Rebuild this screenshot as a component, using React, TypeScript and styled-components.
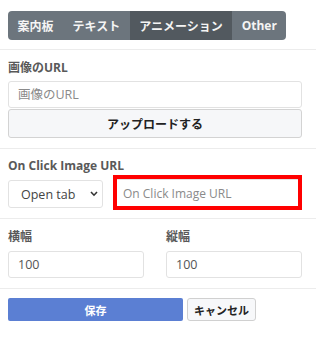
import React from "react";
import styled, { createGlobalStyle } from "styled-components";

const Global = createGlobalStyle`
  html, body { margin: 0; padding: 0; background: #ffffff; }
  body { font-family: "Open Sans", "Noto Sans CJK JP", sans-serif; }
  * { box-sizing: border-box; }
`;

const Page = styled.div`
  width: 316px;
`;

const Section = styled.div<{ $top?: number; $bottom?: number; $last?: boolean }>`
  padding: ${(p) => p.$top ?? 9}px 14px ${(p) => p.$bottom ?? 10}px 8px;
  border-bottom: ${(p) => (p.$last ? "none" : "1px solid #ececec")};
`;

const Tabs = styled.div`
  display: inline-flex;
  border-radius: 4px;
  overflow: hidden;
  height: 29px;
`;

const Tab = styled.div<{ $active?: boolean }>`
  display: flex;
  align-items: center;
  padding: 0 9.5px;
  font-size: 12px;
  font-weight: 700;
  color: #f4f4f4;
  background: ${(p) => (p.$active ? "#52595f" : "#6c757d")};
  font-family: "Open Sans", "Noto Sans CJK JP", sans-serif;
`;

const Label = styled.div<{ $mb?: number }>`
  font-size: 12px;
  font-weight: 700;
  color: #595959;
  line-height: 18px;
  margin-bottom: ${(p) => p.$mb ?? 4}px;
`;

const TextInput = styled.input`
  display: block;
  width: 100%;
  height: 27px;
  border: 1px solid #e2e2e2;
  border-radius: 3px;
  padding: 0 9px;
  font-size: 12.5px;
  font-family: "Open Sans", "Noto Sans CJK JP", sans-serif;
  color: #555;
  background: #fff;
  &::placeholder { color: #8a8a8a; }
`;

const UploadButton = styled.button`
  display: block;
  width: 100%;
  height: 29px;
  margin-top: 1px;
  border: 1px solid #d3d3d3;
  border-radius: 3px;
  background: #f6f7f9;
  font-size: 12px;
  font-weight: 700;
  color: #222;
  font-family: "Open Sans", "Noto Sans CJK JP", sans-serif;
`;

const Row = styled.div`
  display: flex;
  align-items: flex-start;
  gap: 10px;
`;

const SelectWrap = styled.div`
  position: relative;
  width: 95px;
  flex: none;
`;

const Select = styled.select`
  appearance: none;
  -webkit-appearance: none;
  display: block;
  width: 100%;
  height: 28px;
  border: 1px solid #e2e2e2;
  border-radius: 3px;
  background: #fff;
  padding: 0 0 0 12px;
  font-size: 12.5px;
  color: #444;
  font-family: "Open Sans", sans-serif;
`;

const Chevron = styled.svg`
  position: absolute;
  right: 5px;
  top: 11px;
  pointer-events: none;
`;

const Highlight = styled.div`
  flex: 1;
  margin: -5px 0 -2px;
  border: 4px solid #ff0000;
`;

const HighlightInput = styled(TextInput)`
  border-radius: 0;
  border-width: 1px 0 0 0;
  height: 27px;
  padding: 0 6px;
  font-size: 12px;
`;

const Grid = styled.div`
  display: grid;
  grid-template-columns: 136px 136px;
  column-gap: 22px;
`;

const Actions = styled.div`
  display: flex;
  gap: 4px;
`;

const SaveButton = styled.button`
  width: 175px;
  height: 23px;
  border: none;
  border-radius: 2px;
  background: #5b7fd3;
  color: #fff;
  font-size: 11px;
  font-weight: 700;
  font-family: "Open Sans", "Noto Sans CJK JP", sans-serif;
`;

const CancelButton = styled.button`
  height: 23px;
  padding: 0 6px;
  border: 1px solid #d0d0d0;
  border-radius: 3px;
  background: #f7f8fa;
  color: #222;
  font-size: 11px;
  font-weight: 700;
  font-family: "Open Sans", "Noto Sans CJK JP", sans-serif;
`;

export default function App() {
  return (
    <Page>
      <Global />
      <Section $top={11} $bottom={9}>
        <Tabs>
          <Tab>案内板</Tab>
          <Tab>テキスト</Tab>
          <Tab $active>アニメーション</Tab>
          <Tab>Other</Tab>
        </Tabs>
      </Section>
      <Section>
        <Label>画像のURL</Label>
        <TextInput placeholder="画像のURL" />
        <UploadButton>アップロードする</UploadButton>
      </Section>
      <Section $top={8}>
        <Label $mb={5}>On Click Image URL</Label>
        <Row>
          <SelectWrap>
            <Select defaultValue="open">
              <option value="open">Open tab</option>
            </Select>
            <Chevron width="8" height="6" viewBox="0 0 8 6">
              <path d="M1 1 L4 4.2 L7 1" fill="none" stroke="#333" strokeWidth="1.6" />
            </Chevron>
          </SelectWrap>
          <Highlight>
            <HighlightInput placeholder="On Click Image URL" />
          </Highlight>
        </Row>
      </Section>
      <Section>
        <Grid>
          <Label $mb={5}>横幅</Label>
          <Label $mb={5}>縦幅</Label>
          <TextInput defaultValue="100" />
          <TextInput defaultValue="100" />
        </Grid>
      </Section>
      <Section $last>
        <Actions>
          <SaveButton>保存</SaveButton>
          <CancelButton>キャンセル</CancelButton>
        </Actions>
      </Section>
    </Page>
  );
}
